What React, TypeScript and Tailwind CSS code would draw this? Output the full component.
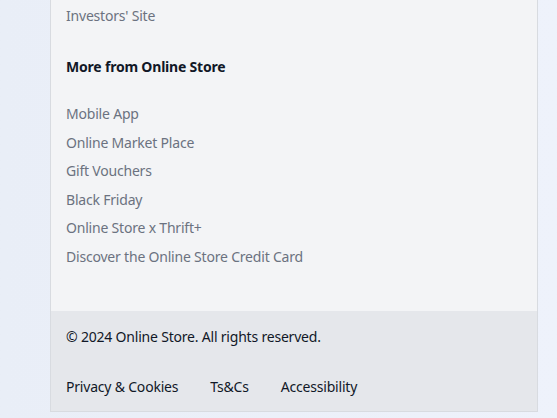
const storeLinks = [
  "Mobile App",
  "Online Market Place",
  "Gift Vouchers",
  "Black Friday",
  "Online Store x Thrift+",
  "Discover the Online Store Credit Card",
]

const legalLinks = ["Privacy & Cookies", "Ts&Cs", "Accessibility"]

export default function App() {
  return (
    <div
      className="min-h-[418px] w-full overflow-hidden bg-gradient-to-r from-[#e9eef7] to-[#eef2fb] text-sm leading-5 tracking-[-0.2px]"
      style={{ fontFamily: '"Noto Sans", "Open Sans", sans-serif' }}
    >
      <footer className="ml-[50px] w-[488px] border-x border-b border-[#d8dbe0]">
        {/* Link columns */}
        <div className="bg-[#f3f4f6] px-[15px] pt-[6px] pb-[44px]">
          <a href="#" className="block text-[#6b7280]">
            Investors' Site
          </a>

          <h3 className="mt-[31px] font-bold text-[#111827]">More from Online Store</h3>

          <ul className="mt-[27px] flex flex-col gap-[8.6px]">
            {storeLinks.map((link) => (
              <li key={link}>
                <a href="#" className="text-[#6b7280]">
                  {link}
                </a>
              </li>
            ))}
          </ul>
        </div>

        {/* Bottom bar */}
        <div className="bg-[#e5e7eb] px-[15px] pt-4 pb-[14px] text-[#111827]">
          <p>© 2024 Online Store. All rights reserved.</p>
          <div className="mt-[30px] flex gap-8">
            {legalLinks.map((link) => (
              <a key={link} href="#">
                {link}
              </a>
            ))}
          </div>
        </div>
      </footer>
    </div>
  )
}
